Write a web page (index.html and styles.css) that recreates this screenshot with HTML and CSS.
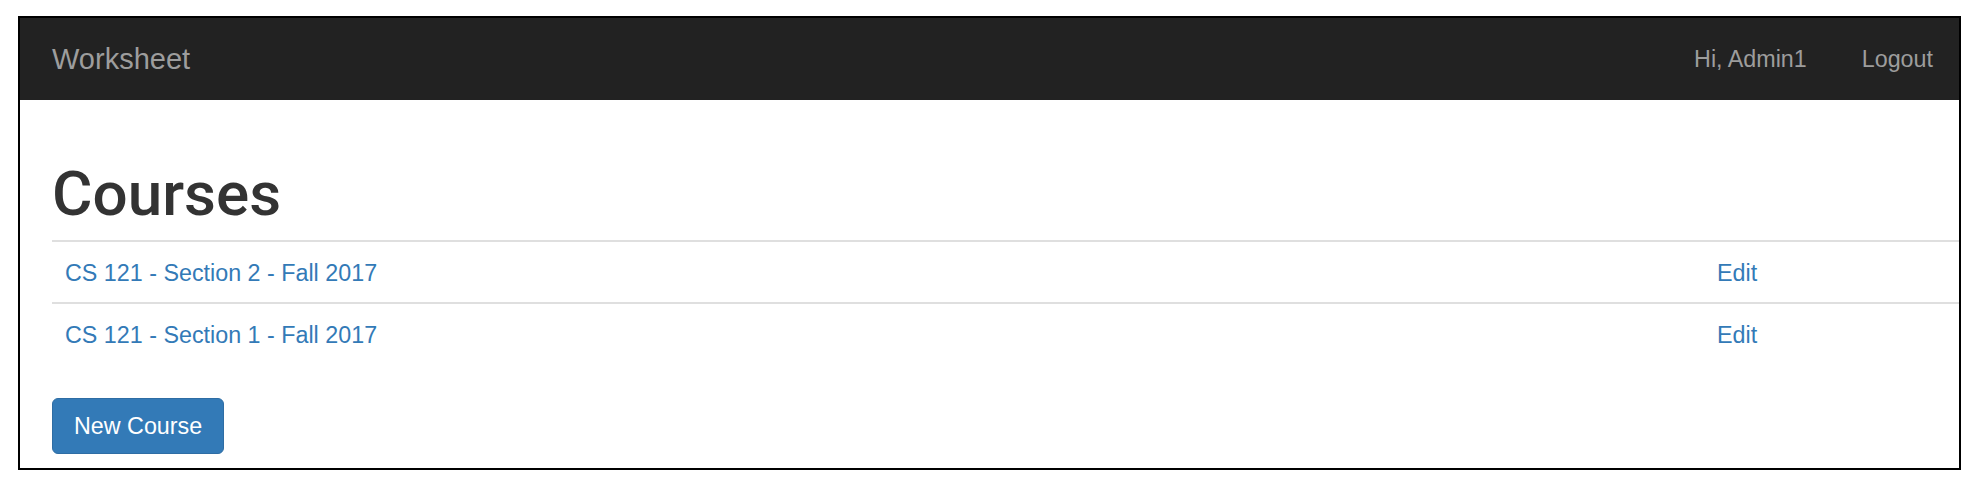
FILE: index.html
```html
<!DOCTYPE html>
<html lang="en">
<head>
<meta charset="utf-8">
<title>Worksheet - Courses</title>
<link rel="stylesheet" href="styles.css">
</head>
<body>
<div class="frame">
  <nav class="navbar">
    <a class="brand" href="#">Worksheet</a>
    <ul class="nav-right">
      <li><a href="#">Hi, Admin1</a></li>
      <li><a href="#">Logout</a></li>
    </ul>
  </nav>
  <main class="content">
    <h1 class="title">Courses</h1>
    <table class="courses">
      <colgroup><col class="col-name"><col></colgroup>
      <tbody>
        <tr>
          <td><a href="#">CS 121 - Section 2 - Fall 2017</a></td>
          <td><a href="#">Edit</a></td>
        </tr>
        <tr>
          <td><a href="#">CS 121 - Section 1 - Fall 2017</a></td>
          <td><a href="#">Edit</a></td>
        </tr>
      </tbody>
    </table>
    <div class="actions">
      <a class="btn-primary" href="#">New Course</a>
    </div>
  </main>
</div>
</body>
</html>
```

FILE: styles.css
```css
* { box-sizing: border-box; }

html, body {
  margin: 0;
  padding: 0;
  background: #fff;
}

body {
  font-family: "Liberation Sans", Arial, Helvetica, sans-serif;
  font-size: 23.3px;
  color: #333;
}

a { text-decoration: none; }

.frame {
  margin: 16px 0 0 18px;
  width: 1943px;
  border: 2px solid #000;
  background: #fff;
  overflow: hidden;
}

.navbar {
  height: 82px;
  background: #222;
  display: flex;
  align-items: center;
  justify-content: space-between;
  padding: 0 26px 0 32px;
}

.brand {
  font-size: 29px;
  line-height: 29px;
  color: #9d9d9d;
}

.nav-right {
  list-style: none;
  margin: 0;
  padding: 0;
  display: flex;
  gap: 55px;
}

.nav-right a {
  color: #9d9d9d;
  line-height: 34px;
}

.content {
  padding: 0 0 14px 32px;
}

.title {
  margin: 60px 0 13px 0;
  font-family: Roboto, "Liberation Sans", Arial, sans-serif;
  font-size: 62px;
  line-height: 67px;
  font-weight: 500;
  color: #333;
}

.courses {
  width: 100%;
  border-collapse: collapse;
  margin-bottom: 34px;
}

.col-name { width: 1652px; }

.courses td {
  border-top: 2px solid #dfdfdf;
  padding: 14px 13px 12px 13px;
  line-height: 34px;
  vertical-align: top;
}

.courses a { color: #337ab7; }

.actions { display: flex; }

.btn-primary {
  display: block;
  background: #337ab7;
  border: 1px solid #2e6da4;
  border-radius: 6px;
  color: #fff;
  padding: 10px 21px;
  line-height: 34px;
}
```
